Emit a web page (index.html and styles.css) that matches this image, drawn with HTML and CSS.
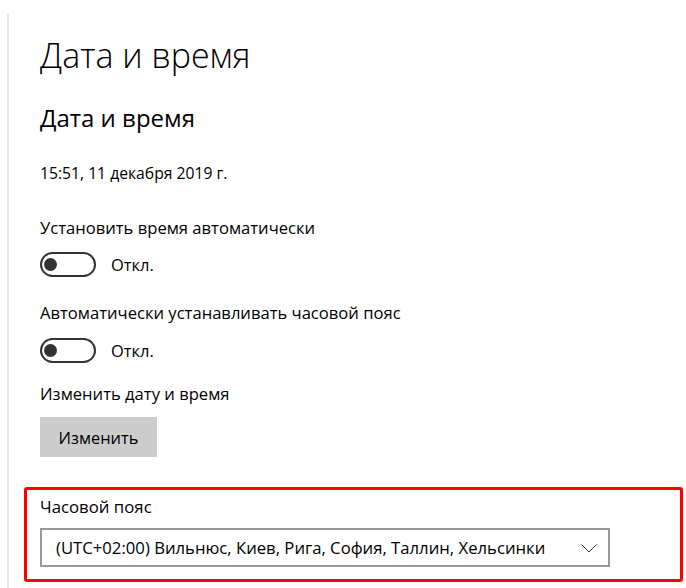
FILE: index.html
```html
<!DOCTYPE html>
<html lang="ru">
<head>
<meta charset="utf-8">
<link rel="stylesheet" href="styles.css">
</head>
<body>
<div class="panel">
  <h1 class="title">Дата и время</h1>
  <h2 class="subtitle">Дата и время</h2>
  <p class="now">15:51, 11 декабря 2019 г.</p>

  <p class="label l1">Установить время автоматически</p>
  <div class="toggle-row t1">
    <span class="toggle"><span class="knob"></span></span>
    <span class="state">Откл.</span>
  </div>

  <p class="label l2">Автоматически устанавливать часовой пояс</p>
  <div class="toggle-row t2">
    <span class="toggle"><span class="knob"></span></span>
    <span class="state">Откл.</span>
  </div>

  <p class="label l3">Изменить дату и время</p>
  <button class="btn">Изменить</button>

  <div class="tz-box">
    <p class="label tz-label">Часовой пояс</p>
    <div class="select">
      <span class="select-text">(UTC+02:00) Вильнюс, Киев, Рига, София, Таллин, Хельсинки</span>
      <svg class="chev" width="16" height="9" viewBox="0 0 16 9"><path d="M0.5 0.5 L8 8 L15.5 0.5" fill="none" stroke="#333" stroke-width="1"/></svg>
    </div>
  </div>
</div>
</body>
</html>
```

FILE: styles.css
```css
html, body { margin: 0; padding: 0; background: #fff; }
body { font-family: "Open Sans", "Noto Sans", sans-serif; color: #000; width: 686px; height: 588px; overflow: hidden; }
.panel {
  margin: 14px 0 0 7px;
  border-left: 2px solid #e6e6e6;
  padding-left: 31px;
  height: 574px;
}
.title { margin: 0; padding-top: 21px; font-size: 34px; font-weight: 300; line-height: 40px; }
.subtitle { margin: 28px 0 0; font-size: 24px; font-weight: 400; line-height: 30px; }
.now { margin: 30px 0 0; font-size: 15.7px; line-height: 20px; }
.label { margin: 0; font-size: 16.6px; line-height: 20px; }
.l1 { margin-top: 35px; }
.l2 { margin-top: 26px; }
.l3 { margin-top: 21px; }
.toggle-row { display: flex; align-items: center; gap: 15px; height: 25px; }
.t1 { margin-top: 14px; }
.t2 { margin-top: 15px; }
.toggle { box-sizing: border-box; width: 56px; height: 25px; border: 2px solid #333; border-radius: 13px; display: flex; align-items: center; padding-left: 2px; }
.knob { width: 13px; height: 13px; border-radius: 50%; background: #333; }
.state { font-size: 16.5px; }
.btn {
  display: block; margin-top: 13px; width: 117px; height: 40px; border: 0; background: #ccc;
  font-family: inherit; font-size: 16.4px; color: #000; padding: 0;
}
.tz-box {
  margin: 30px 0 0 -16px; width: 659px; height: 95px; box-sizing: border-box;
  border: 3px solid #f00; border-radius: 3px; padding: 7px 0 0 13px;
}
.tz-label { font-size: 16.8px; line-height: 20px; }
.select {
  box-sizing: border-box; margin-top: 11px; width: 570px; height: 39px; border: 2px solid #999;
  display: flex; align-items: center; justify-content: space-between; padding: 0 11px 0 14px;
}
.select-text { font-size: 16.7px; }
.chev { display: block; margin-top: 1px; }
```
